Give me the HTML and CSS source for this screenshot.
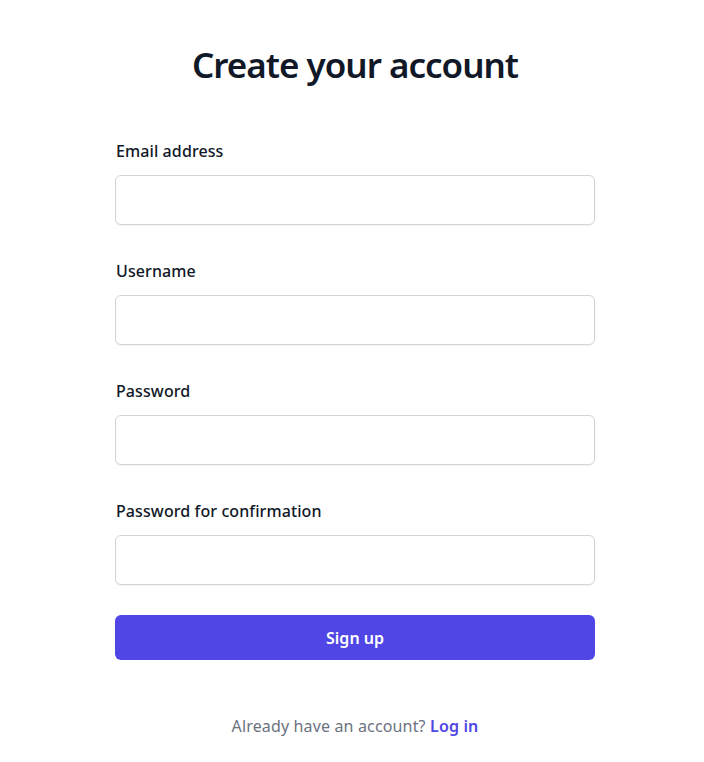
FILE: index.html
```html
<!DOCTYPE html>
<html lang="en">
<head>
<meta charset="utf-8">
<title>Create your account</title>
<link rel="stylesheet" href="styles.css">
</head>
<body>
<main class="page">
  <h1 class="title">Create your account</h1>
  <form class="form">
    <div class="field">
      <label class="label" for="email">Email address</label>
      <input class="input" id="email" type="email">
    </div>
    <div class="field">
      <label class="label" for="username">Username</label>
      <input class="input" id="username" type="text">
    </div>
    <div class="field">
      <label class="label" for="password">Password</label>
      <input class="input" id="password" type="password">
    </div>
    <div class="field">
      <label class="label" for="password2">Password for confirmation</label>
      <input class="input" id="password2" type="password">
    </div>
    <button class="button" type="button">Sign up</button>
  </form>
  <p class="footer">Already have an account? <a class="link" href="#">Log in</a></p>
</main>
</body>
</html>
```

FILE: styles.css
```css
* { box-sizing: border-box; }
html, body { margin: 0; padding: 0; background: #ffffff; }
body {
  font-family: "Noto Sans", "Open Sans", sans-serif;
  color: #111827;
  padding-left: 6px;
}
.page {
  width: 480px;
  margin: 0 auto;
  padding-top: 45px;
  display: flex;
  flex-direction: column;
}
.title {
  margin: 0;
  font-size: 35px;
  line-height: 40px;
  font-weight: 600;
  text-align: center;
  color: #111827;
  letter-spacing: -1px;
}
.form {
  margin-top: 54px;
  display: flex;
  flex-direction: column;
  gap: 34px;
}
.field {
  display: flex;
  flex-direction: column;
  gap: 12px;
}
.label {
  font-size: 16px;
  line-height: 24px;
  font-weight: 500;
  color: #111827;
  padding-left: 1px;
  letter-spacing: 0.1px;
}
.input {
  height: 50px;
  width: 100%;
  border: 1px solid #d1d5db;
  border-radius: 6px;
  background: #fff;
  font: inherit;
  box-shadow: 0 1px 2px rgba(0,0,0,0.05);
}
.button {
  margin-top: -4px;
  height: 45px;
  border: none;
  border-radius: 6px;
  background: #4f46e5;
  color: #ffffff;
  font-family: inherit;
  font-size: 16px;
  font-weight: 600;
  line-height: 24px;
}
.footer {
  margin: 54px 0 0;
  font-size: 16px;
  line-height: 24px;
  text-align: center;
  color: #6b7280;
  letter-spacing: 0.15px;
}
.link {
  color: #4f46e5;
  font-weight: 600;
  text-decoration: none;
}
```
